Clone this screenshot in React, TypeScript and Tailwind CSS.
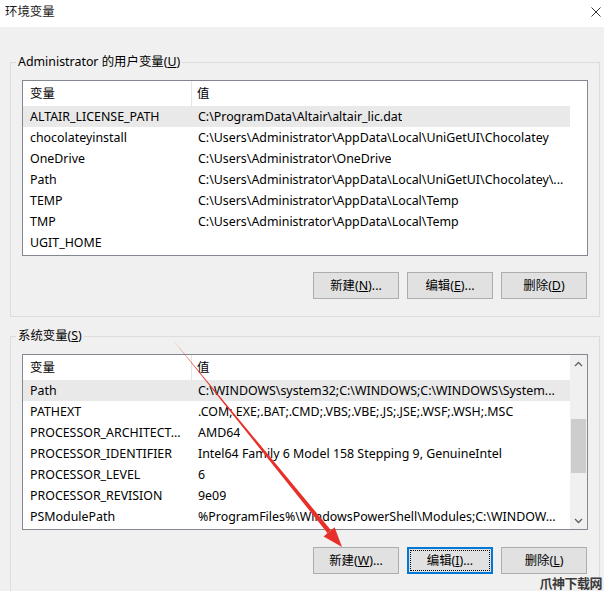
import type { ReactNode } from 'react';

type Row = { name: string; value: string; selected?: boolean };

const userRows: Row[] = [
  { name: 'ALTAIR_LICENSE_PATH', value: 'C:\\ProgramData\\Altair\\altair_lic.dat', selected: true },
  { name: 'chocolateyinstall', value: 'C:\\Users\\Administrator\\AppData\\Local\\UniGetUI\\Chocolatey' },
  { name: 'OneDrive', value: 'C:\\Users\\Administrator\\OneDrive' },
  { name: 'Path', value: 'C:\\Users\\Administrator\\AppData\\Local\\UniGetUI\\Chocolatey\\...' },
  { name: 'TEMP', value: 'C:\\Users\\Administrator\\AppData\\Local\\Temp' },
  { name: 'TMP', value: 'C:\\Users\\Administrator\\AppData\\Local\\Temp' },
  { name: 'UGIT_HOME', value: '' },
];

const systemRows: Row[] = [
  { name: 'Path', value: 'C:\\WINDOWS\\system32;C:\\WINDOWS;C:\\WINDOWS\\System...', selected: true },
  { name: 'PATHEXT', value: '.COM;.EXE;.BAT;.CMD;.VBS;.VBE;.JS;.JSE;.WSF;.WSH;.MSC' },
  { name: 'PROCESSOR_ARCHITECT...', value: 'AMD64' },
  { name: 'PROCESSOR_IDENTIFIER', value: 'Intel64 Family 6 Model 158 Stepping 9, GenuineIntel' },
  { name: 'PROCESSOR_LEVEL', value: '6' },
  { name: 'PROCESSOR_REVISION', value: '9e09' },
  { name: 'PSModulePath', value: '%ProgramFiles%\\WindowsPowerShell\\Modules;C:\\WINDOW...' },
];

function Chevron({ up }: { up?: boolean }) {
  return (
    <svg width="9" height="6" viewBox="0 0 9 6">
      <polyline
        points={up ? '1,5 4.5,1.5 8,5' : '1,1 4.5,4.5 8,1'}
        fill="none"
        stroke="#606060"
        strokeWidth="1.3"
      />
    </svg>
  );
}

function ScrollBar() {
  return (
    <div className="w-[17px] bg-[#f0f0f0] flex flex-col">
      <div className="h-[17px] flex items-center justify-center">
        <Chevron up />
      </div>
      <div className="h-[47px]" />
      <div className="h-[54px] mx-[1px] bg-[#cdcdcd]" />
      <div className="flex-1" />
      <div className="h-[17px] flex items-center justify-center">
        <Chevron />
      </div>
    </div>
  );
}

function VarList({ rows, scroll }: { rows: Row[]; scroll?: boolean }) {
  return (
    <div className="h-[176px] border border-[#828790] bg-white flex">
      <div className="flex-1 flex flex-col min-w-0">
        <div className="h-[25px] flex items-center shrink-0">
          <div className="w-[169px] h-full flex items-center pl-[7px] border-r border-[#e5e5e5]">变量</div>
          <div className="pl-[5px]">值</div>
        </div>
        {rows.map((r) => (
          <div
            key={r.name}
            className={`h-[21px] flex items-center whitespace-nowrap ${r.selected ? 'bg-[#e9e9e9]' : ''}`}
          >
            <div className="w-[169px] pl-[7px] overflow-hidden shrink-0">{r.name}</div>
            <div className="pl-[6px] overflow-hidden">{r.value}</div>
          </div>
        ))}
      </div>
      {scroll ? <ScrollBar /> : <div className="w-[17px]" />}
    </div>
  );
}

function WinButton({ children, focused }: { children: ReactNode; focused?: boolean }) {
  if (focused) {
    return (
      <button className="w-[86px] h-[27px] border-2 border-[#0078d7] bg-[#e1e1e1] p-[1px]">
        <div className="w-full h-full border border-dotted border-black flex items-center justify-center">
          {children}
        </div>
      </button>
    );
  }
  return (
    <button className="w-[86px] h-[27px] border border-[#adadad] bg-[#e1e1e1] flex items-center justify-center">
      {children}
    </button>
  );
}

function Group({ label, className, children }: { label: ReactNode; className: string; children: ReactNode }) {
  return (
    <fieldset className={`ml-[10px] w-[590px] border border-[#dcdcdc] px-[11px] ${className}`}>
      <legend className="-ml-[6px] px-[2px] leading-[16px]">{label}</legend>
      {children}
    </fieldset>
  );
}

export default function App() {
  return (
    <div className="relative w-[604px] h-[591px] overflow-hidden bg-[#f0f0f0] text-[12.4px] leading-[16px] text-black font-['Noto_Sans','Noto_Sans_CJK_SC',sans-serif]">
      {/* title bar */}
      <div className="h-[27px] bg-white flex items-center justify-between pl-[5px] pr-[3px] pb-[3px]">
        <span className="text-[12.4px] text-[#1a1a1a]">环境变量</span>
        <svg width="10" height="10" viewBox="0 0 10 10">
          <path d="M0.5 0.5 L9.5 9.5 M9.5 0.5 L0.5 9.5" stroke="#333" strokeWidth="1" />
        </svg>
      </div>

      <Group
        className="mt-[27px] pb-[17px]"
        label={
          <>
            Administrator 的用户变量(<u>U</u>)
          </>
        }
      >
        <div className="mt-[10px]">
          <VarList rows={userRows} />
        </div>
        <div className="mt-[16px] flex justify-end gap-[8px] pr-[1px]">
          <WinButton>
            新建(<u>N</u>)...
          </WinButton>
          <WinButton>
            编辑(<u>E</u>)...
          </WinButton>
          <WinButton>
            删除(<u>D</u>)
          </WinButton>
        </div>
      </Group>

      <Group
        className="mt-[11px] pb-[40px]"
        label={
          <>
            系统变量(<u>S</u>)
          </>
        }
      >
        <div className="mt-[10px]">
          <VarList rows={systemRows} scroll />
        </div>
        <div className="mt-[17px] flex justify-end gap-[8px] pr-[1px]">
          <WinButton>
            新建(<u>W</u>)...
          </WinButton>
          <WinButton focused>
            编辑(<u>I</u>)...
          </WinButton>
          <WinButton>
            删除(<u>L</u>)
          </WinButton>
        </div>
      </Group>

      {/* red annotation arrow */}
      <svg className="absolute left-0 top-0 pointer-events-none" width="604" height="591">
        <polygon points="173,340 327.6,533.2 331,530.3" fill="#e8302a" />
        <polygon points="342,547 323.6,536.4 334.6,527.2" fill="#e8302a" />
      </svg>

      {/* watermark */}
      <div className="absolute right-[2px] bottom-0 leading-[16px] text-[13px] font-bold text-[#3a3a3a] tracking-[-0.5px]">
        爪神下载网
      </div>
    </div>
  );
}
